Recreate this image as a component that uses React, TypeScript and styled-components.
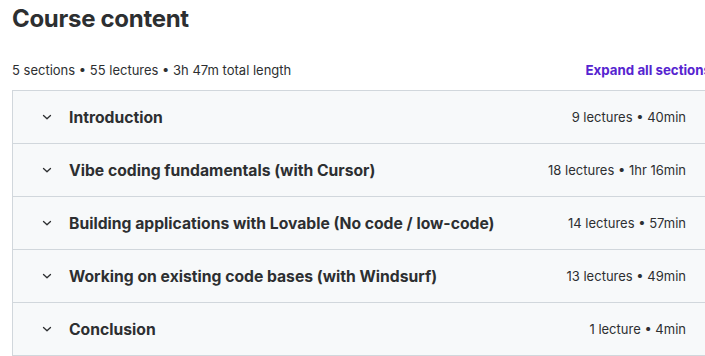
import React from "react";
import styled, { createGlobalStyle } from "styled-components";

const Global = createGlobalStyle`
  html, body { margin: 0; padding: 0; background: #fff; overflow: hidden; }
  body { font-family: Inter, "Noto Sans", sans-serif; color: #2d2f31; }
`;

const Page = styled.div`
  width: 699px;
  padding: 4px 0 0 12px;
`;

const Title = styled.h2`
  margin: 0;
  font-size: 24px;
  line-height: 30px;
  font-weight: 700;
  letter-spacing: -0.3px;
  color: #2d2f31;
`;

const SummaryBar = styled.div`
  display: flex;
  justify-content: space-between;
  align-items: center;
  margin-top: 26px;
  margin-bottom: 10px;
  font-size: 13px;
  line-height: 20px;
`;

const ExpandLink = styled.button`
  border: 0;
  background: none;
  padding: 0;
  font: inherit;
  font-size: 13.3px;
  font-weight: 700;
  color: #5624d0;
  white-space: nowrap;
`;

const Panel = styled.div`
  border: 1px solid #d1d7dc;
  border-bottom: 0;
`;

const Row = styled.div`
  display: flex;
  align-items: center;
  height: 52px;
  padding: 0 24px 0 28px;
  background: #f7f9fa;
  border-bottom: 1px solid #d1d7dc;
`;

const Chevron = styled.span`
  display: flex;
  width: 12px;
  margin-right: 16px;
  color: #2d2f31;
`;

const SectionTitle = styled.span`
  flex: 1;
  font-size: 15.7px;
  font-weight: 700;
  color: #2d2f31;
`;

const Meta = styled.span`
  font-size: 13px;
  color: #2d2f31;
`;

const sections = [
  ["Introduction", "9 lectures • 40min"],
  ["Vibe coding fundamentals (with Cursor)", "18 lectures • 1hr 16min"],
  ["Building applications with Lovable (No code / low-code)", "14 lectures • 57min"],
  ["Working on existing code bases (with Windsurf)", "13 lectures • 49min"],
  ["Conclusion", "1 lecture • 4min"],
];

const ChevronIcon = () => (
  <svg width="12" height="12" viewBox="0 0 12 12" fill="none">
    <path d="M2.5 4.5 L6 7.8 L9.5 4.5" stroke="currentColor" strokeWidth="1.3" strokeLinecap="round" strokeLinejoin="round" />
  </svg>
);

export default function App() {
  return (
    <Page>
      <Global />
      <Title>Course content</Title>
      <SummaryBar>
        <span>5 sections • 55 lectures • 3h 47m total length</span>
        <ExpandLink>Expand all sections</ExpandLink>
      </SummaryBar>
      <Panel>
        {sections.map(([t, m]) => (
          <Row key={t}>
            <Chevron><ChevronIcon /></Chevron>
            <SectionTitle>{t}</SectionTitle>
            <Meta>{m}</Meta>
          </Row>
        ))}
      </Panel>
    </Page>
  );
}
